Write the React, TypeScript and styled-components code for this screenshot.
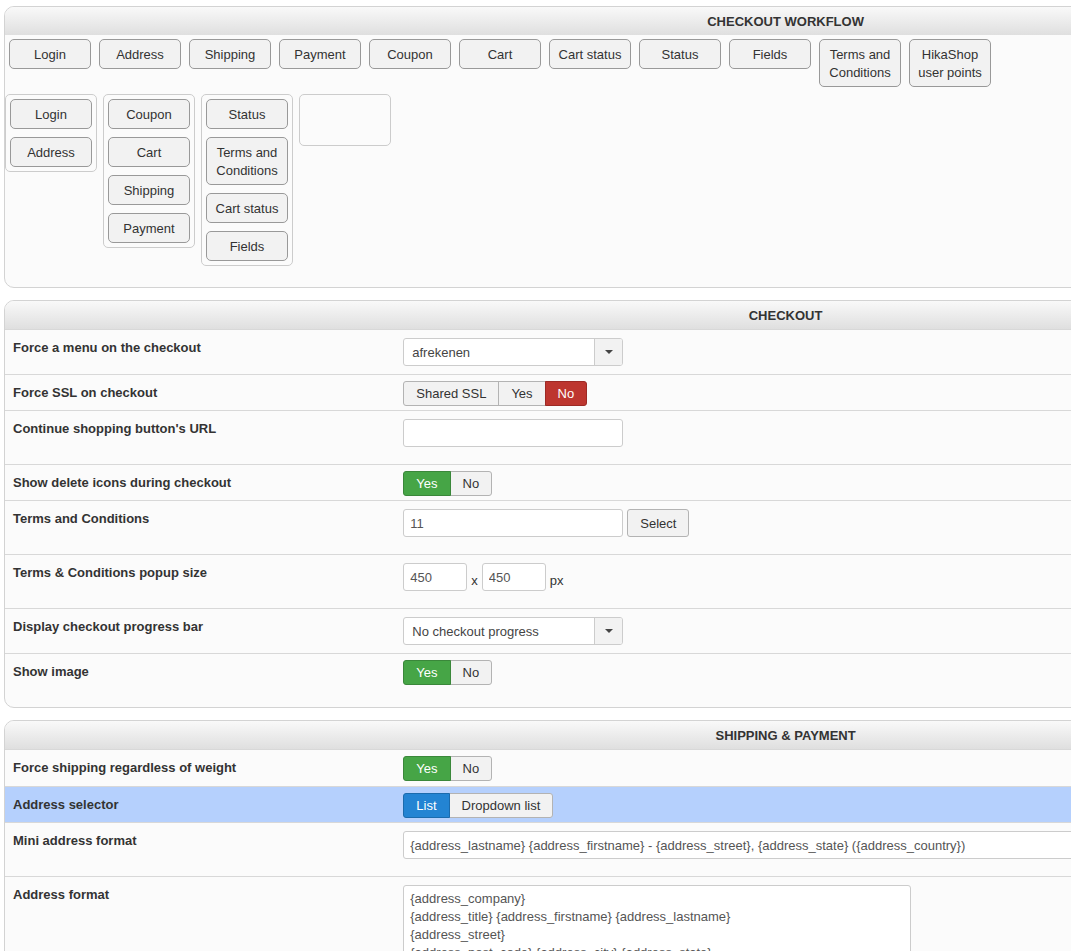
import React, { useId, useState } from 'react';
import styled, { createGlobalStyle, css } from 'styled-components';

const GlobalStyle = createGlobalStyle`
  *, *::before, *::after { box-sizing: border-box; }
  body {
    margin: 0;
    background: #fff;
    color: #333;
    font: 13px/18px "Liberation Sans", Arial, sans-serif;
  }
  button, input, select, textarea { font: inherit; margin: 0; }
`;

const Page = styled.main`
  display: flex;
  flex-direction: column;
  gap: 12px;
  padding: 6px 0 12px 4px;
  overflow-x: clip;
`;

/* Panels run wider than the window, as the settings table does in the admin. */
const PanelBox = styled.section`
  width: 146.5%;
  overflow: hidden;
  background: #fbfbfb;
  border: 1px solid #d3d3d3;
  border-radius: 10px;
`;

const PanelTitle = styled.h2`
  margin: 0;
  padding: 6px 0 4px;
  font-size: 13px;
  line-height: 18px;
  font-weight: bold;
  text-align: center;
  text-transform: uppercase;
  background: linear-gradient(#f9f9f9, #dfdfdf);
`;

const Palette = styled.div`
  display: flex;
  align-items: flex-start;
  gap: 8px;
  padding: 4px 4px 7px;
`;

const Steps = styled.div`
  display: flex;
  align-items: flex-start;
  gap: 6px;
  padding-bottom: 21px;
`;

const Step = styled.div`
  display: flex;
  flex-direction: column;
  gap: 8px;
  width: 92px;
  min-height: 52px;
  padding: 4px;
  border: 1px solid #ccc;
  border-radius: 5px;
`;

const Block = styled.button`
  width: 82px;
  padding: 6px 4px 4px;
  color: #333;
  text-align: center;
  line-height: 18px;
  background: #f2f2f2;
  border: 1px solid #999;
  border-radius: 5px;
  cursor: move;
`;

type Space = 'tight' | 'snug' | 'normal' | 'roomy' | 'loose';
const bottomSpace: Record<Space, number> = { tight: 4, snug: 5, normal: 8, roomy: 17, loose: 22 };

const Row = styled.div<{ $top: number; $space: Space; $active?: boolean }>`
  display: grid;
  grid-template-columns: 25% 1fr;
  border-top: 1px solid #d8d8d8;
  background: ${(p) => (p.$active ? '#b5d0fd' : 'transparent')};

  > :first-child { padding: 9px 8px 0; }
  > :last-child { padding: ${(p) => p.$top}px 8px ${(p) => bottomSpace[p.$space]}px; }
`;

const labelText = css`
  font-weight: bold;
  line-height: 18px;
`;
const RowLabel = styled.label`${labelText}`;
const RowHeading = styled.span`${labelText}`;

const Cell = styled.div`
  display: flex;
  align-items: flex-end;
  gap: 4px;
`;

const Unit = styled.span`
  padding-bottom: 1px;
`;

const field = css`
  color: #555;
  background: #fff;
  border: 1px solid #ccc;
  border-radius: 3px;
`;

const TextInput = styled.input<{ $width: string }>`
  ${field}
  width: ${(p) => p.$width};
  height: 28px;
  padding: 4px 6px;
`;

const TextArea = styled.textarea`
  ${field}
  display: block;
  width: 508px;
  padding: 4px 6px;
  line-height: 18px;
  resize: none;
`;

const SelectFrame = styled.div`
  position: relative;
  width: 220px;
  height: 28px;
`;

const SelectInput = styled.select`
  ${field}
  appearance: none;
  width: 100%;
  height: 100%;
  padding: 2px 36px 0 8px;
  color: #444;
`;

const SelectArrow = styled.span`
  position: absolute;
  inset: 1px 1px 1px auto;
  display: grid;
  place-items: center;
  width: 28px;
  background: #f2f2f2;
  border-left: 1px solid #ccc;
  border-radius: 0 2px 2px 0;
  pointer-events: none;
`;

const Button = styled.button`
  height: 28px;
  padding: 2px 12px 0;
  color: #333;
  background: #f2f2f2;
  border: 1px solid #b3b3b3;
  border-radius: 3px;
`;

type Tone = 'green' | 'red' | 'blue';
const tones: Record<Tone, [string, string]> = {
  green: ['#46a546', '#3a873a'],
  red: ['#bd362f', '#9c2a25'],
  blue: ['#2384d3', '#1b6bad'],
};

const ToggleGroup = styled.div`display: flex;`;

const ToggleOption = styled.label<{ $tone?: Tone }>`
  position: relative;
  z-index: ${(p) => (p.$tone ? 1 : 0)};
  height: 25px;
  padding: 0 12px;
  line-height: 23px;
  color: ${(p) => (p.$tone ? '#fff' : '#333')};
  background: ${(p) => (p.$tone ? tones[p.$tone][0] : '#f2f2f2')};
  border: 1px solid ${(p) => (p.$tone ? tones[p.$tone][1] : '#b3b3b3')};
  cursor: pointer;

  & + & { margin-left: -1px; }
  &:first-child { border-radius: 3px 0 0 3px; }
  &:last-child { border-radius: 0 3px 3px 0; }

  input {
    position: absolute;
    inset: 0;
    appearance: none;
    cursor: pointer;
  }
`;

function Panel({ title, children }: { title: string; children: React.ReactNode }) {
  return (
    <PanelBox>
      <PanelTitle>{title}</PanelTitle>
      {children}
    </PanelBox>
  );
}

type Option = { text: string; tone: Tone };
const yesNo: Option[] = [
  { text: 'Yes', tone: 'green' },
  { text: 'No', tone: 'red' },
];

function ToggleRow(props: { label: string; options?: Option[]; initial: string; space?: Space; active?: boolean }) {
  const { label, options = yesNo, initial, space = 'tight', active } = props;
  const [value, setValue] = useState(initial);
  const id = useId();
  return (
    <Row $top={6} $space={space} $active={active}>
      <RowHeading id={id}>{label}</RowHeading>
      <Cell>
        <ToggleGroup role="radiogroup" aria-labelledby={id}>
          {options.map((o) => (
            <ToggleOption key={o.text} $tone={value === o.text ? o.tone : undefined}>
              <input type="radio" name={id} checked={value === o.text} onChange={() => setValue(o.text)} />
              {o.text}
            </ToggleOption>
          ))}
        </ToggleGroup>
      </Cell>
    </Row>
  );
}

function SelectRow({ label, value }: { label: string; value: string }) {
  const id = useId();
  return (
    <Row $top={8} $space="normal">
      <RowLabel htmlFor={id}>{label}</RowLabel>
      <Cell>
        <SelectFrame>
          <SelectInput id={id} defaultValue={value}>
            <option>{value}</option>
          </SelectInput>
          <SelectArrow>
            <svg width="8" height="4" viewBox="0 0 8 4" aria-hidden="true">
              <path d="M0 0h8L4 4z" fill="#444" />
            </svg>
          </SelectArrow>
        </SelectFrame>
      </Cell>
    </Row>
  );
}

function InputRow(props: { label: string; value?: string; width?: string; children?: React.ReactNode }) {
  const { label, value = '', width = '220px', children } = props;
  const id = useId();
  return (
    <Row $top={8} $space="roomy">
      <RowLabel htmlFor={id}>{label}</RowLabel>
      <Cell>
        <TextInput id={id} $width={width} defaultValue={value} />
        {children}
      </Cell>
    </Row>
  );
}

const palette = [
  'Login', 'Address', 'Shipping', 'Payment', 'Coupon', 'Cart', 'Cart status',
  'Status', 'Fields', 'Terms and Conditions', 'HikaShop user points',
];

const steps = [
  ['Login', 'Address'],
  ['Coupon', 'Cart', 'Shipping', 'Payment'],
  ['Status', 'Terms and Conditions', 'Cart status', 'Fields'],
  [],
];

const addressFormat = `{address_company}
{address_title} {address_firstname} {address_lastname}
{address_street}
{address_post_code} {address_city} {address_state}
{address_country}`;

export default function App() {
  return (
    <>
      <GlobalStyle />
      <Page>
        <Panel title="Checkout workflow">
          <Palette>
            {palette.map((name) => <Block key={name} type="button">{name}</Block>)}
          </Palette>
          <Steps>
            {steps.map((names, i) => (
              <Step key={i}>
                {names.map((name) => <Block key={name} type="button">{name}</Block>)}
              </Step>
            ))}
          </Steps>
        </Panel>

        <Panel title="Checkout">
          <SelectRow label="Force a menu on the checkout" value="afrekenen" />
          <ToggleRow
            label="Force SSL on checkout"
            options={[{ text: 'Shared SSL', tone: 'green' }, ...yesNo]}
            initial="No"
          />
          <InputRow label="Continue shopping button's URL" />
          <ToggleRow label="Show delete icons during checkout" initial="Yes" />
          <InputRow label="Terms and Conditions" value="11">
            <Button type="button">Select</Button>
          </InputRow>
          <InputRow label="Terms &amp; Conditions popup size" value="450" width="64px">
            <Unit>x</Unit>
            <TextInput $width="64px" defaultValue="450" aria-label="Popup height" />
            <Unit>px</Unit>
          </InputRow>
          <SelectRow label="Display checkout progress bar" value="No checkout progress" />
          <ToggleRow label="Show image" initial="Yes" space="loose" />
        </Panel>

        <Panel title="Shipping &amp; Payment">
          <ToggleRow label="Force shipping regardless of weight" initial="Yes" space="snug" />
          <ToggleRow
            label="Address selector"
            options={[{ text: 'List', tone: 'blue' }, { text: 'Dropdown list', tone: 'blue' }]}
            initial="List"
            active
          />
          <InputRow
            label="Mini address format"
            value="{address_lastname} {address_firstname} - {address_street}, {address_state} ({address_country})"
            width="100%"
          />
          <Row $top={8} $space="normal">
            <RowLabel htmlFor="address-format">Address format</RowLabel>
            <Cell>
              <TextArea id="address-format" rows={5} defaultValue={addressFormat} />
            </Cell>
          </Row>
        </Panel>
      </Page>
    </>
  );
}
